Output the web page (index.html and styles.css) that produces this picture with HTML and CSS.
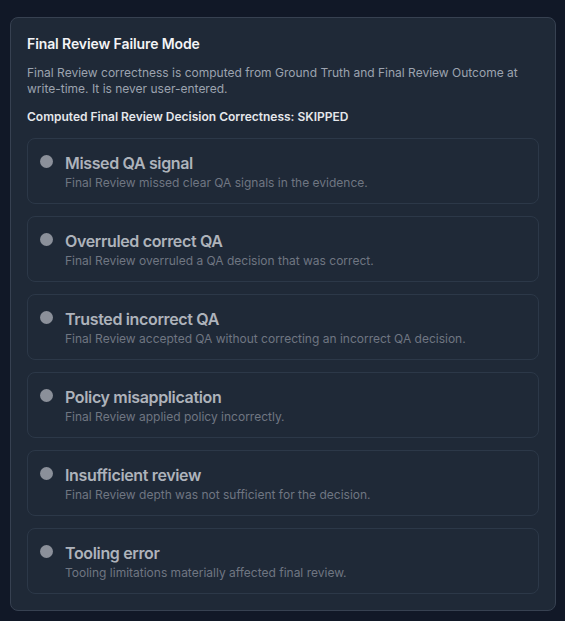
FILE: index.html
```html
<!DOCTYPE html>
<html>
  <head>
    <title>Final Review Failure Mode</title>
    <link rel="stylesheet" href="styles.css">
  </head>
  <body>
    <div class="card">
      <h2 class="card-title">Final Review Failure Mode</h2>
      <p class="card-desc">
        Final Review correctness is computed from Ground Truth and Final Review Outcome at
        write-time. It is never user-entered.
      </p>
      <p class="computed">Computed Final Review Decision Correctness: SKIPPED</p>

      <div class="options">
        <label class="option">
          <span class="dot"></span>
          <span class="option-text">
            <span class="option-title">Missed QA signal</span>
            <span class="option-desc">Final Review missed clear QA signals in the evidence.</span>
          </span>
        </label>
        <label class="option">
          <span class="dot"></span>
          <span class="option-text">
            <span class="option-title">Overruled correct QA</span>
            <span class="option-desc">Final Review overruled a QA decision that was correct.</span>
          </span>
        </label>
        <label class="option">
          <span class="dot"></span>
          <span class="option-text">
            <span class="option-title">Trusted incorrect QA</span>
            <span class="option-desc">Final Review accepted QA without correcting an incorrect QA decision.</span>
          </span>
        </label>
        <label class="option">
          <span class="dot"></span>
          <span class="option-text">
            <span class="option-title">Policy misapplication</span>
            <span class="option-desc">Final Review applied policy incorrectly.</span>
          </span>
        </label>
        <label class="option">
          <span class="dot"></span>
          <span class="option-text">
            <span class="option-title">Insufficient review</span>
            <span class="option-desc">Final Review depth was not sufficient for the decision.</span>
          </span>
        </label>
        <label class="option">
          <span class="dot"></span>
          <span class="option-text">
            <span class="option-title">Tooling error</span>
            <span class="option-desc">Tooling limitations materially affected final review.</span>
          </span>
        </label>
      </div>
    </div>
  </body>
</html>
```

FILE: styles.css
```css
body {
  margin: 0;
  padding: 17px 10px 10px 10px;
  background-color: #111827;
  font-family: Inter, "Noto Sans", sans-serif;
}
.card {
  width: 546px;
  box-sizing: border-box;
  padding: 16px;
  background-color: #1f2937;
  border: 1px solid #374151;
  border-radius: 8px;
}
.card-title {
  margin: 0 0 11px 0;
  font-size: 14px;
  line-height: 20px;
  font-weight: 600;
  letter-spacing: -0.1px;
  color: #f3f4f6;
}
.card-desc {
  margin: 0 0 12px 0;
  font-size: 12px;
  line-height: 16px;
  color: #9ca3af;
}
.computed {
  margin: 0 0 13px 0;
  font-size: 12px;
  line-height: 16px;
  font-weight: 600;
  color: #e5e7eb;
}
.options {
  display: flex;
  flex-direction: column;
  gap: 12px;
}
.option {
  display: flex;
  gap: 12px;
  padding: 12px;
  border: 1px solid #2c3848;
  border-radius: 8px;
  cursor: not-allowed;
}
.dot {
  flex: none;
  width: 13px;
  height: 13px;
  margin-top: 4px;
  border-radius: 50%;
  background-color: #8b909a;
}
.option-text {
  display: flex;
  flex-direction: column;
}
.option-title {
  font-size: 16px;
  line-height: 24px;
  font-weight: 600;
  letter-spacing: -0.35px;
  color: #aeb3bb;
}
.option-desc {
  font-size: 12px;
  line-height: 16px;
  color: #6f7682;
}
```
